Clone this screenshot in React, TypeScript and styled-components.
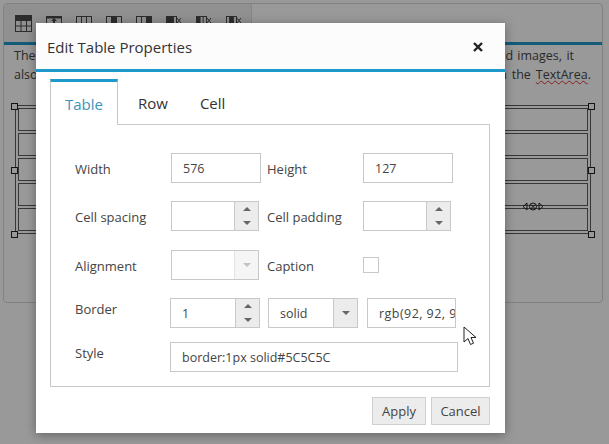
import React from "react";
import styled, { createGlobalStyle } from "styled-components";

const Global = createGlobalStyle`
  html, body { margin: 0; padding: 0; background: #fff; }
  body { width: 609px; height: 444px; overflow: hidden; font-family: "Open Sans", "Noto Sans", sans-serif; color: #333; }
  * { box-sizing: border-box; }
`;

const Page = styled.div`
  position: relative;
  width: 609px;
  height: 444px;
  padding: 3px 6px 0 3px;
  overflow: hidden;
`;

const Editor = styled.div`
  height: 300px;
  border: 1px solid #d8d8d8;
  border-radius: 4px;
`;

const Toolbar = styled.div`
  height: 41px;
  border-bottom: 3px solid #1e99cc;
  display: flex;
`;

const ToolGroup = styled.div`
  width: 248px;
  display: flex;
  align-items: flex-start;
  padding: 11px 0 0 11px;
  gap: 14px;
  background: #f0f0f0;
  border-right: 1px solid #e0e0e0;
`;

const Content = styled.div`
  position: relative;
  padding: 1px 0 0 10px;
`;

const TextLine = styled.div<{ $end: number }>`
  width: ${(p) => p.$end}px;
  height: 19px;
  line-height: 19px;
  font-size: 12.5px;
  color: #474747;
  white-space: nowrap;
  text-align: justify;
  text-align-last: justify;
`;

const Squiggle = styled.span`
  text-decoration: underline wavy #d33;
  text-decoration-thickness: 1px;
`;

const EditorTable = styled.table`
  margin: 21px 0 0 1px;
  width: 576px;
  height: 129px;
  border: 1px solid #5c5c5c;
  border-spacing: 2px;
  border-collapse: separate;
  td { border: 1px solid #5c5c5c; padding: 0; }
`;

const Handle = styled.span<{ $x: number; $y: number }>`
  position: absolute;
  left: ${(p) => p.$x}px;
  top: ${(p) => p.$y}px;
  width: 7px;
  height: 7px;
  border: 1px solid #222;
  background: #fff;
`;

const Resizer = styled.svg`
  position: absolute;
  left: 518px;
  top: 157px;
`;

const Overlay = styled.div`
  position: absolute;
  inset: 0;
  background: rgba(0, 0, 0, 0.4);
`;

const Pointer = styled.svg`
  position: absolute;
  left: 463px;
  top: 326px;
`;

const Dialog = styled.div`
  position: absolute;
  left: 36px;
  top: 23px;
  width: 469px;
  height: 410px;
  background: #fff;
  box-shadow: 0 2px 10px rgba(0, 0, 0, 0.35);
  display: flex;
  flex-direction: column;
`;

const Header = styled.div`
  height: 49px;
  flex: none;
  background: #fcfcfc;
  border-bottom: 3px solid #1e99cc;
  display: flex;
  align-items: center;
  justify-content: space-between;
  padding: 2px 22px 0 11px;
`;

const Title = styled.div`
  font-size: 15px;
  color: #333;
`;

const Close = styled.svg`
  display: block;
`;

const Body = styled.div`
  flex: 1;
  padding: 7px 15px 0 14px;
  display: flex;
  flex-direction: column;
`;

const Tabs = styled.div`
  display: flex;
  height: 46px;
  flex: none;
`;

const Tab = styled.div<{ $active?: boolean }>`
  height: ${(p) => (p.$active ? "46px" : "45px")};
  padding: 0 ${(p) => (p.$active ? "14px" : "15px")};
  margin-right: ${(p) => (p.$active ? "4px" : "0")};
  font-size: 15px;
  display: flex;
  align-items: center;
  color: ${(p) => (p.$active ? "#3a96bd" : "#333")};
  background: #fff;
  position: relative;
  z-index: 1;
  border-top: 3px solid ${(p) => (p.$active ? "#1e99cc" : "transparent")};
  border-left: 1px solid ${(p) => (p.$active ? "#c8c8c8" : "transparent")};
  border-right: 1px solid ${(p) => (p.$active ? "#c8c8c8" : "transparent")};
`;

const Pane = styled.div`
  margin-top: -1px;
  height: 263px;
  flex: none;
  border: 1px solid #c8c8c8;
  padding: 28px 0 0 24px;
  display: flex;
  flex-direction: column;
`;

const Row = styled.div<{ $gap: number }>`
  display: flex;
  align-items: center;
  height: 30px;
  flex: none;
  margin-bottom: ${(p) => p.$gap}px;
`;

const Label = styled.div<{ $w: number; $raised?: boolean }>`
  width: ${(p) => p.$w}px;
  flex: none;
  font-size: 13px;
  color: #444;
  white-space: nowrap;
  margin-top: ${(p) => (p.$raised ? "-8px" : "2px")};
`;

const Field = styled.div<{ $w: number; $mr?: number }>`
  width: ${(p) => p.$w}px;
  height: 30px;
  flex: none;
  margin-right: ${(p) => p.$mr ?? 0}px;
  border: 1px solid #c8c8c8;
  background: #fff;
  display: flex;
  align-items: stretch;
  font-size: 12.5px;
  color: #444;
  overflow: hidden;
`;

const FieldText = styled.div<{ $spread?: boolean }>`
  flex: 1;
  min-width: 0;
  padding-left: 11px;
  display: flex;
  align-items: center;
  white-space: nowrap;
  overflow: hidden;
  letter-spacing: ${(p) => (p.$spread ? "0.45px" : "0")};
`;

const Spin = styled.div`
  width: 24px;
  flex: none;
  border-left: 1px solid #c8c8c8;
  background: #ececec;
  display: flex;
  flex-direction: column;
  align-items: center;
  justify-content: center;
  gap: 10px;
`;

const Arrow = styled.span<{ $up?: boolean; $light?: boolean }>`
  width: 0;
  height: 0;
  border-left: 4px solid transparent;
  border-right: 4px solid transparent;
  ${(p) =>
    p.$up
      ? "border-bottom: 4px solid #666;"
      : `border-top: 4px solid ${p.$light ? "#c4c4c4" : "#666"};`}
`;

const DropButton = styled.div<{ $disabled?: boolean }>`
  width: 24px;
  flex: none;
  border-left: 1px solid ${(p) => (p.$disabled ? "#e4e4e4" : "#c8c8c8")};
  background: ${(p) => (p.$disabled ? "#f5f5f5" : "#ececec")};
  display: flex;
  align-items: center;
  justify-content: center;
`;

const Checkbox = styled.span`
  width: 16px;
  height: 16px;
  border: 1px solid #c8c8c8;
  background: #fff;
  display: block;
`;

const Footer = styled.div`
  display: flex;
  justify-content: flex-end;
  gap: 5px;
  padding-top: 10px;
`;

const Button = styled.button<{ $w: number }>`
  width: ${(p) => p.$w}px;
  height: 28px;
  padding: 0;
  border: 1px solid #d0d0d0;
  background: #ececec;
  color: #444;
  font: 13px "Open Sans", "Noto Sans", sans-serif;
`;

const GridIcon = ({ fill, x }: { fill: number[]; x?: boolean }) => {
  const w = x ? 10 : 15;
  return (
    <svg width="16" height="16" viewBox="0 0 16 16" fill="none" stroke="#4a4a4a">
      <rect x="0.5" y="1.5" width={w} height="7" />
      {[0, 1, 2].map((c) => (
        <g key={c}>
          {fill.includes(c) && <rect x={0.5 + (c * w) / 3} y="1.5" width={w / 3} height="7" fill="#4a4a4a" />}
          {c > 0 && <path d={`M${0.5 + (c * w) / 3} 1.5V8.5`} />}
        </g>
      ))}
      {x && <path d="M11 3l4 5M15 3l-4 5" />}
    </svg>
  );
};

const RowInsertIcon = () => (
  <svg width="16" height="16" viewBox="0 0 16 16" fill="none" stroke="#4a4a4a">
    <rect x="0.5" y="1.5" width="15" height="7" />
    <path d="M.5 2.5h15" strokeWidth="2" />
    <path d="M8 3l-3 3h2v2.5h2V6h2z" fill="#4a4a4a" stroke="none" />
  </svg>
);

const TableIcon = () => (
  <svg width="17" height="17" viewBox="0 0 17 17" fill="none" stroke="#4a4a4a">
    <rect x="0.5" y="0.5" width="16" height="16" />
    <rect x="0.5" y="0.5" width="16" height="5" fill="#4a4a4a" />
    <path d="M.5 11h16M6 5v12M11.5 5v12" />
  </svg>
);

export default function App() {
  return (
    <>
      <Global />
      <Page>
        <Editor>
          <Toolbar>
            <ToolGroup>
              <TableIcon />
              <RowInsertIcon />
              <GridIcon fill={[]} />
              <GridIcon fill={[1]} />
              <GridIcon fill={[2]} />
              <GridIcon fill={[0, 1]} x />
              <GridIcon fill={[0]} x />
              <GridIcon fill={[1]} x />
            </ToolGroup>
          </Toolbar>
          <Content>
            <TextLine $end={560}>The RichTextEditor is a WYSIWYG editor that supports rich text formatting, links and images, it</TextLine>
            <TextLine $end={577}>also allows you to insert tables, then edit their rows, columns and cells directly in the <Squiggle>TextArea</Squiggle>.</TextLine>
            <EditorTable>
              <tbody>
                {[0, 1, 2, 3, 4].map((r) => (
                  <tr key={r}>
                    <td />
                  </tr>
                ))}
              </tbody>
            </EditorTable>
            <Handle $x={7} $y={58} />
            <Handle $x={584} $y={58} />
            <Handle $x={7} $y={122} />
            <Handle $x={584} $y={122} />
            <Handle $x={7} $y={186} />
            <Handle $x={584} $y={186} />
            <Resizer width="22" height="9" viewBox="0 0 22 9" fill="none" stroke="#222">
              <path d="M5 1L1 4.5 5 8zM17 1l4 3.5L17 8z" />
              <circle cx="11" cy="4.5" r="3.5" />
              <path d="M9 2.5l4 4M13 2.5l-4 4" />
            </Resizer>
          </Content>
        </Editor>
        <Overlay />
        <Dialog>
          <Header>
            <Title>Edit Table Properties</Title>
            <Close width="10" height="10" viewBox="0 0 10 10" stroke="#222" strokeWidth="2.4">
              <path d="M1 1l8 8M9 1l-8 8" />
            </Close>
          </Header>
          <Body>
            <Tabs>
              <Tab $active>Table</Tab>
              <Tab>Row</Tab>
              <Tab>Cell</Tab>
            </Tabs>
            <Pane>
              <Row $gap={18}>
                <Label $w={96}>Width</Label>
                <Field $w={90} $mr={6}><FieldText>576</FieldText></Field>
                <Label $w={96}>Height</Label>
                <Field $w={90}><FieldText>127</FieldText></Field>
              </Row>
              <Row $gap={19}>
                <Label $w={96}>Cell spacing</Label>
                <Field $w={88} $mr={8}><FieldText /><Spin><Arrow $up /><Arrow /></Spin></Field>
                <Label $w={96}>Cell padding</Label>
                <Field $w={88}><FieldText /><Spin><Arrow $up /><Arrow /></Spin></Field>
              </Row>
              <Row $gap={18}>
                <Label $w={96}>Alignment</Label>
                <Field $w={88} $mr={8}><FieldText /><DropButton $disabled><Arrow $light /></DropButton></Field>
                <Label $w={96}>Caption</Label>
                <Checkbox />
              </Row>
              <Row $gap={14}>
                <Label $w={95} $raised>Border</Label>
                <Field $w={90} $mr={8}><FieldText>1</FieldText><Spin><Arrow $up /><Arrow /></Spin></Field>
                <Field $w={90} $mr={9}><FieldText>solid</FieldText><DropButton><Arrow /></DropButton></Field>
                <Field $w={89}><FieldText $spread>rgb(92, 92, 92)</FieldText></Field>
              </Row>
              <Row $gap={0}>
                <Label $w={95} $raised>Style</Label>
                <Field $w={288}><FieldText>border:1px solid#5C5C5C</FieldText></Field>
              </Row>
            </Pane>
            <Footer>
              <Button $w={54}>Apply</Button>
              <Button $w={59}>Cancel</Button>
            </Footer>
          </Body>
        </Dialog>
        <Pointer width="14" height="22" viewBox="0 0 14 22">
          <path d="M1 1v15l4-3.5 2.5 6 3-1.3-2.5-5.7h5z" fill="#fff" stroke="#222" />
        </Pointer>
      </Page>
    </>
  );
}
